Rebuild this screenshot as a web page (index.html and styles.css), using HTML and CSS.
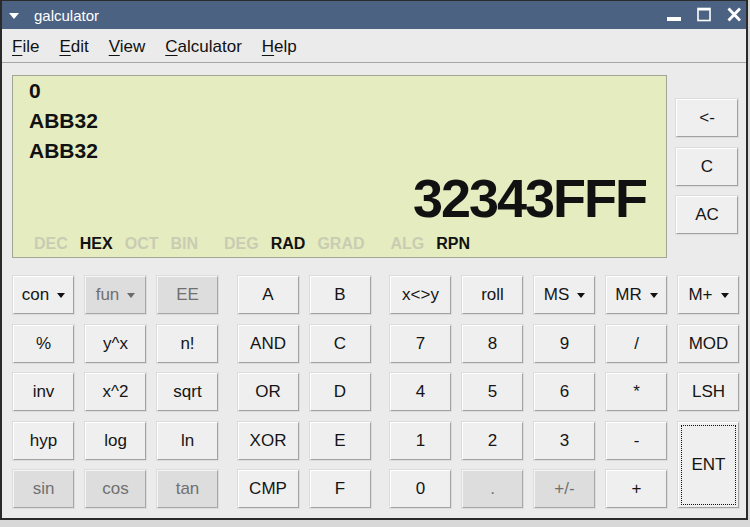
FILE: index.html
```html
<!DOCTYPE html>
<html lang="en">
<head>
    <meta charset="UTF-8">
    <title>galculator</title>
    <link rel="stylesheet" href="styles.css">
</head>
<body>

<div class="window">
    <!-- Title bar -->
    <div class="titlebar">
        <span class="title-arrow"></span>
        <span class="title">galculator</span>
        <div class="wm-buttons">
            <svg width="16" height="16" viewBox="0 0 16 16"><rect x="1" y="10" width="14" height="4" fill="#fff"/></svg>
            <svg width="16" height="16" viewBox="0 0 16 16"><rect x="2" y="1.5" width="12" height="12" fill="none" stroke="#fff" stroke-width="1.6"/><rect x="2" y="1" width="12" height="2.5" fill="#fff"/></svg>
            <svg width="16" height="16" viewBox="0 0 16 16"><path d="M2.5 1.5 L14 13.5 M14 1.5 L2.5 13.5" stroke="#fff" stroke-width="2.8"/></svg>
        </div>
    </div>

    <!-- Menu bar -->
    <div class="menubar">
        <span class="menu-item"><u>F</u>ile</span>
        <span class="menu-item"><u>E</u>dit</span>
        <span class="menu-item"><u>V</u>iew</span>
        <span class="menu-item"><u>C</u>alculator</span>
        <span class="menu-item"><u>H</u>elp</span>
    </div>

    <div class="main">
        <div class="top-row">
            <!-- LCD display -->
            <div class="display">
                <div class="stack">
                    <div>0</div>
                    <div>ABB32</div>
                    <div>ABB32</div>
                </div>
                <div class="value">32343FFF</div>
                <div class="status">
                    <div class="status-group">
                        <span class="off">DEC</span>
                        <span class="on">HEX</span>
                        <span class="off">OCT</span>
                        <span class="off">BIN</span>
                    </div>
                    <div class="status-group">
                        <span class="off">DEG</span>
                        <span class="on">RAD</span>
                        <span class="off">GRAD</span>
                    </div>
                    <div class="status-group">
                        <span class="off">ALG</span>
                        <span class="on">RPN</span>
                    </div>
                </div>
            </div>

            <div class="side-buttons">
                <button class="key">&lt;-</button>
                <button class="key">C</button>
                <button class="key">AC</button>
            </div>
        </div>

        <!-- Keypad -->
        <div class="keypad">
            <div class="key-group cols-3">
                <button class="key">con <span class="drop"></span></button>
                <button class="key disabled">fun <span class="drop"></span></button>
                <button class="key disabled">EE</button>
                <button class="key">%</button>
                <button class="key">y^x</button>
                <button class="key">n!</button>
                <button class="key">inv</button>
                <button class="key">x^2</button>
                <button class="key">sqrt</button>
                <button class="key">hyp</button>
                <button class="key">log</button>
                <button class="key">ln</button>
                <button class="key disabled">sin</button>
                <button class="key disabled">cos</button>
                <button class="key disabled">tan</button>
            </div>

            <div class="key-group cols-2">
                <button class="key">A</button>
                <button class="key">B</button>
                <button class="key">AND</button>
                <button class="key">C</button>
                <button class="key">OR</button>
                <button class="key">D</button>
                <button class="key">XOR</button>
                <button class="key">E</button>
                <button class="key">CMP</button>
                <button class="key">F</button>
            </div>

            <div class="key-group cols-5">
                <button class="key">x&lt;&gt;y</button>
                <button class="key">roll</button>
                <button class="key">MS <span class="drop"></span></button>
                <button class="key">MR <span class="drop"></span></button>
                <button class="key">M+ <span class="drop"></span></button>
                <button class="key">7</button>
                <button class="key">8</button>
                <button class="key">9</button>
                <button class="key">/</button>
                <button class="key">MOD</button>
                <button class="key">4</button>
                <button class="key">5</button>
                <button class="key">6</button>
                <button class="key">*</button>
                <button class="key">LSH</button>
                <button class="key">1</button>
                <button class="key">2</button>
                <button class="key">3</button>
                <button class="key">-</button>
                <button class="key enter"><span class="focus">ENT</span></button>
                <button class="key">0</button>
                <button class="key disabled">.</button>
                <button class="key disabled">+/-</button>
                <button class="key">+</button>
            </div>
        </div>
    </div>
</div>

</body>
</html>
```

FILE: styles.css
```css
body {
    margin: 0;
    padding: 0;
    background-color: #d8d8d8;
    font-family: "Liberation Sans", Arial, sans-serif;
}
.window {
    width: 748px;
    height: 520px;
    box-sizing: border-box;
    border: 2px solid #2a2a2a;
    border-top-width: 1px;
    background-color: #ebebeb;
    overflow: hidden;
}

/* title bar */
.titlebar {
    height: 28px;
    background-color: #4b6283;
    display: flex;
    align-items: center;
    color: #fff;
    padding: 0 4px 0 7px;
}
.title-arrow {
    width: 0;
    height: 0;
    border-left: 5px solid transparent;
    border-right: 5px solid transparent;
    border-top: 6px solid #fff;
    margin-right: 15px;
    margin-top: 1px;
}
.title {
    font-size: 15px;
}
.wm-buttons {
    margin-left: auto;
    display: flex;
    gap: 14px;
}

/* menu bar */
.menubar {
    height: 34px;
    box-sizing: border-box;
    padding-top: 3px;
    border-bottom: 1px solid #a6a6a6;
    display: flex;
    align-items: center;
    font-size: 17px;
    color: #111;
}
.menu-item {
    padding: 0 10px;
}
.menu-item u {
    text-decoration-thickness: 1px;
    text-underline-offset: 3px;
}

.main {
    padding: 12px 0 0 10px;
}
.top-row {
    display: flex;
    align-items: center;
    gap: 9px;
}

/* display */
.display {
    width: 655px;
    height: 183px;
    box-sizing: border-box;
    border: 1px solid #a3a595;
    background-color: #e5ecbf;
    padding: 0 20px 0 16px;
    font-weight: bold;
    color: #111;
}
.stack {
    font-size: 21px;
    line-height: 30px;
}
.value {
    font-size: 54px;
    line-height: 54px;
    letter-spacing: -2px;
    text-align: right;
    margin-top: 5px;
}
.status {
    display: flex;
    gap: 26px;
    font-size: 16px;
    line-height: 16px;
    margin-top: 11px;
    padding-left: 5px;
}
.status-group {
    display: flex;
    gap: 12px;
}
.status .off {
    color: #c9ccb3;
}
.status .on {
    color: #111;
}

.side-buttons {
    display: flex;
    flex-direction: column;
    gap: 10.5px;
}
.side-buttons .key {
    width: 62px;
}

/* buttons */
.key {
    height: 38px;
    box-sizing: border-box;
    background-color: #efefef;
    border: 1px solid;
    border-color: #ffffff #a2a2a2 #a2a2a2 #ffffff;
    box-shadow: 0 0 0 1px #dcdcdc;
    font-family: "Liberation Sans", Arial, sans-serif;
    font-size: 17px;
    color: #151515;
    padding: 0;
    display: flex;
    align-items: center;
    justify-content: center;
}
.key.disabled {
    background-color: #dddddd;
    color: #707070;
    border-color: #f6f6f6 #a8a8a8 #a8a8a8 #f6f6f6;
}
.drop {
    width: 0;
    height: 0;
    border-left: 4.5px solid transparent;
    border-right: 4.5px solid transparent;
    border-top: 5px solid #111;
    margin-left: 8px;
}
.key.disabled .drop {
    border-top-color: #6a6a6a;
}

.keypad {
    display: flex;
    gap: 19.5px;
    margin-top: 18px;
    padding-left: 1px;
}
.key-group {
    display: grid;
    grid-template-rows: repeat(5, 38px);
    grid-auto-columns: 61px;
    column-gap: 11px;
    row-gap: 10.5px;
}
.cols-3 {
    grid-template-columns: repeat(3, 61px);
}
.cols-2 {
    grid-template-columns: repeat(2, 61px);
}
.cols-5 {
    grid-template-columns: repeat(5, 61px);
}
.key.enter {
    grid-column: 5;
    grid-row: 4 / span 2;
    height: auto;
    padding: 2px;
}
.focus {
    width: 100%;
    height: 100%;
    box-sizing: border-box;
    border: 1px dotted #111;
    display: flex;
    align-items: center;
    justify-content: center;
}
```
